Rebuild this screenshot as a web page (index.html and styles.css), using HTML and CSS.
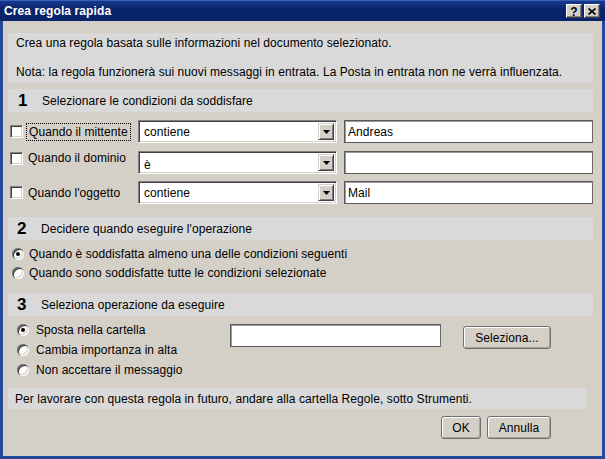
FILE: index.html
```html
<!DOCTYPE html>
<html lang="it">
<head>
<meta charset="utf-8">
<title>Crea regola rapida</title>
<link rel="stylesheet" href="styles.css">
</head>
<body>
<div class="window">
  <div class="titlebar">
    <span class="title">Crea regola rapida</span>
    <div class="tb-buttons">
      <span class="tb-btn help">?</span>
      <span class="tb-btn close"><svg width="8" height="7" viewBox="0 0 8 7"><path d="M0.5 0.5 L7.5 6.5 M7.5 0.5 L0.5 6.5" stroke="#000" stroke-width="1.6" fill="none"/></svg></span>
    </div>
  </div>
  <div class="content">
    <div class="band info">
      <p>Crea una regola basata sulle informazioni nel documento selezionato.</p>
      <p class="note">Nota: la regola funzionerà sui nuovi messaggi in entrata. La Posta in entrata non ne verrà influenzata.</p>
    </div>

    <div class="band section first"><span class="num">1</span><span class="sec-title">Selezionare le condizioni da soddisfare</span></div>

    <div class="cond-row">
      <span class="check"></span>
      <span class="cond-label"><span class="focus">Quando il mittente</span></span>
      <div class="select"><span class="select-val">contiene</span><span class="drop"><svg width="7" height="4" viewBox="0 0 7 4"><path d="M0 0H7L3.5 4Z" fill="#000"/></svg></span></div>
      <div class="input">Andreas</div>
    </div>
    <div class="cond-row second">
      <span class="check"></span>
      <span class="cond-label">Quando il dominio</span>
      <div class="select"><span class="select-val low">è</span><span class="drop"><svg width="7" height="4" viewBox="0 0 7 4"><path d="M0 0H7L3.5 4Z" fill="#000"/></svg></span></div>
      <div class="input"></div>
    </div>
    <div class="cond-row third">
      <span class="check"></span>
      <span class="cond-label">Quando l'oggetto</span>
      <div class="select"><span class="select-val">contiene</span><span class="drop"><svg width="7" height="4" viewBox="0 0 7 4"><path d="M0 0H7L3.5 4Z" fill="#000"/></svg></span></div>
      <div class="input">Mail</div>
    </div>

    <div class="band section second-sec"><span class="num">2</span><span class="sec-title">Decidere quando eseguire l'operazione</span></div>
    <div class="radio-list when">
      <div class="radio-row"><span class="radio on"></span><span>Quando è soddisfatta almeno una delle condizioni seguenti</span></div>
      <div class="radio-row"><span class="radio"></span><span>Quando sono soddisfatte tutte le condizioni selezionate</span></div>
    </div>

    <div class="band section third-sec"><span class="num">3</span><span class="sec-title">Seleziona operazione da eseguire</span></div>
    <div class="action">
      <div class="radio-list ops">
        <div class="radio-row"><span class="radio on"></span><span>Sposta nella cartella</span></div>
        <div class="radio-row"><span class="radio"></span><span>Cambia importanza in alta</span></div>
        <div class="radio-row"><span class="radio"></span><span>Non accettare il messaggio</span></div>
      </div>
      <div class="input folder"></div>
      <span class="btn pick">Seleziona...</span>
    </div>

    <div class="band footer-note">Per lavorare con questa regola in futuro, andare alla cartella Regole, sotto Strumenti.</div>

    <div class="buttons">
      <span class="btn ok">OK</span>
      <span class="btn cancel">Annulla</span>
    </div>
  </div>
</div>
</body>
</html>
```

FILE: styles.css
```css
* { box-sizing: border-box; }
html, body { margin: 0; padding: 0; }
body {
  width: 605px;
  height: 459px;
  overflow: hidden;
  font-family: "Liberation Sans", Arial, sans-serif;
  font-size: 12px;
  color: #000;
  background: #d4d0c8;
}
.window {
  width: 605px;
  height: 459px;
  display: flex;
  flex-direction: column;
  background: #d4d0c8;
  border: 3px solid #254a9c;
  border-top: 0;
}
.titlebar {
  height: 21px;
  margin: 0 -3px;
  padding: 0 5px 0 4px;
  display: flex;
  align-items: center;
  justify-content: space-between;
  background: linear-gradient(#173a8e, #0a246a 40%, #0a246a);
  border-top: 1px solid #3560b8;
}
.title {
  color: #fff;
  font-weight: bold;
  font-size: 12px;
  letter-spacing: 0.1px;
}
.tb-buttons { display: flex; gap: 2px; }
.tb-btn {
  width: 16px;
  height: 14px;
  display: flex;
  align-items: center;
  justify-content: center;
  background: #d4d0c8;
  border: 1px solid;
  border-color: #fff #404040 #404040 #fff;
  box-shadow: inset -1px -1px 0 #808080;
  font-weight: bold;
  font-size: 11px;
  line-height: 1;
}
.tb-btn.help { font-size: 12px; padding-top: 1px; }

.content {
  flex: 1;
  display: flex;
  flex-direction: column;
  padding: 0 9px 0 5px;
  letter-spacing: 0.07px;
}
.band { background: #d9d9d9; }
.info {
  margin-top: 12px;
  height: 50px;
  padding: 3px 8px 0;
}
.info p { margin: 0; line-height: 14px; }
.info .note { margin-top: 15px; }

.section {
  height: 23px;
  display: flex;
  align-items: center;
}
.section.first { margin-top: 6px; }
.num {
  font-weight: bold;
  font-size: 17px;
  width: 33px;
  padding-left: 9px;
  letter-spacing: 0;
}
.section.first .num { padding-left: 10px; width: 34px; }
.sec-title { padding-top: 1px; }

.cond-row {
  display: flex;
  align-items: center;
  height: 23px;
  margin-top: 8px;
  padding-left: 2px;
}
.cond-row.second { margin-top: 8px; }
.cond-row.third { margin-top: 7px; }
.check {
  width: 13px;
  height: 13px;
  flex: none;
  background: #fff;
  border: 1px solid;
  border-color: #808080 #fff #fff #808080;
  box-shadow: inset 1px 1px 0 #404040, inset -1px -1px 0 #d4d0c8;
}
.cond-label {
  width: 115px;
  flex: none;
  padding-left: 5px;
}
.cond-row.second .check { align-self: flex-start; margin-top: 1px; }
.cond-row.second .cond-label { align-self: flex-start; padding-top: 0; }
.focus {
  outline: 1px dotted #000;
  outline-offset: 1px;
  padding: 0 1px;
}
.select {
  width: 199px;
  height: 23px;
  flex: none;
  display: flex;
  align-items: stretch;
  background: #fff;
  border: 1px solid;
  border-color: #808080 #fff #fff #808080;
  box-shadow: inset 1px 1px 0 #404040, inset -1px -1px 0 #d4d0c8;
  padding: 2px 2px 2px 2px;
}
.select-val {
  flex: 1;
  display: flex;
  align-items: center;
  padding-left: 3px;
}
.select-val.low { padding-top: 4px; }
.drop {
  width: 16px;
  flex: none;
  display: flex;
  align-items: center;
  justify-content: center;
  background: #d4d0c8;
  border: 1px solid;
  border-color: #d4d0c8 #404040 #404040 #d4d0c8;
  box-shadow: inset 1px 1px 0 #fff, inset -1px -1px 0 #808080;
}
.input {
  flex: 1;
  height: 23px;
  margin-left: 7px;
  background: #fff;
  border: 1px solid #5a5a5a;
  border-right-color: #6a6a6a;
  box-shadow: inset 1px 1px 0 #9a9a9a;
  padding: 0 3px;
  display: flex;
  align-items: center;
}

.second-sec { margin-top: 13px; }
.third-sec { margin-top: 12px; }

.radio-list { display: flex; flex-direction: column; }
.radio-row {
  display: flex;
  align-items: center;
  height: 16px;
}
.radio {
  width: 12px;
  height: 12px;
  flex: none;
  border-radius: 50%;
  background: #fff;
  box-shadow: inset 1px 1px 0 #808080, inset 2px 2px 0 #404040, inset -1px -1px 0 #ffffff, inset -2px -2px 0 #d4d0c8;
  display: flex;
  align-items: center;
  justify-content: center;
  margin-right: 5px;
}
.radio.on::after {
  content: "";
  width: 4px;
  height: 4px;
  border-radius: 50%;
  background: #000;
}
.when { margin-top: 6px; padding-left: 4px; gap: 3px; }

.action {
  display: flex;
  align-items: flex-start;
}
.ops { margin-top: 6px; padding-left: 9px; gap: 4px; width: 222px; }
.ops .radio { margin-right: 7px; }
.input.folder {
  flex: none;
  width: 211px;
  margin: 8px 0 0 0;
}
.btn {
  display: flex;
  align-items: center;
  justify-content: center;
  height: 23px;
  background: #d4d0c8;
  border: 1px solid #6f6f6f;
  border-radius: 3px;
  box-shadow: inset 1px 1px 0 #fff, inset -1px -1px 0 #a9a59d;
}
.btn.pick { width: 88px; margin: 10px 0 0 22px; }

.footer-note {
  margin-top: 10px;
  margin-right: 7px;
  height: 21px;
  padding-left: 7px;
  display: flex;
  align-items: center;
}
.buttons {
  display: flex;
  justify-content: flex-end;
  gap: 6px;
  margin-top: 7px;
  padding-right: 42px;
}
.btn.ok { width: 40px; }
.btn.cancel { width: 64px; }
```
